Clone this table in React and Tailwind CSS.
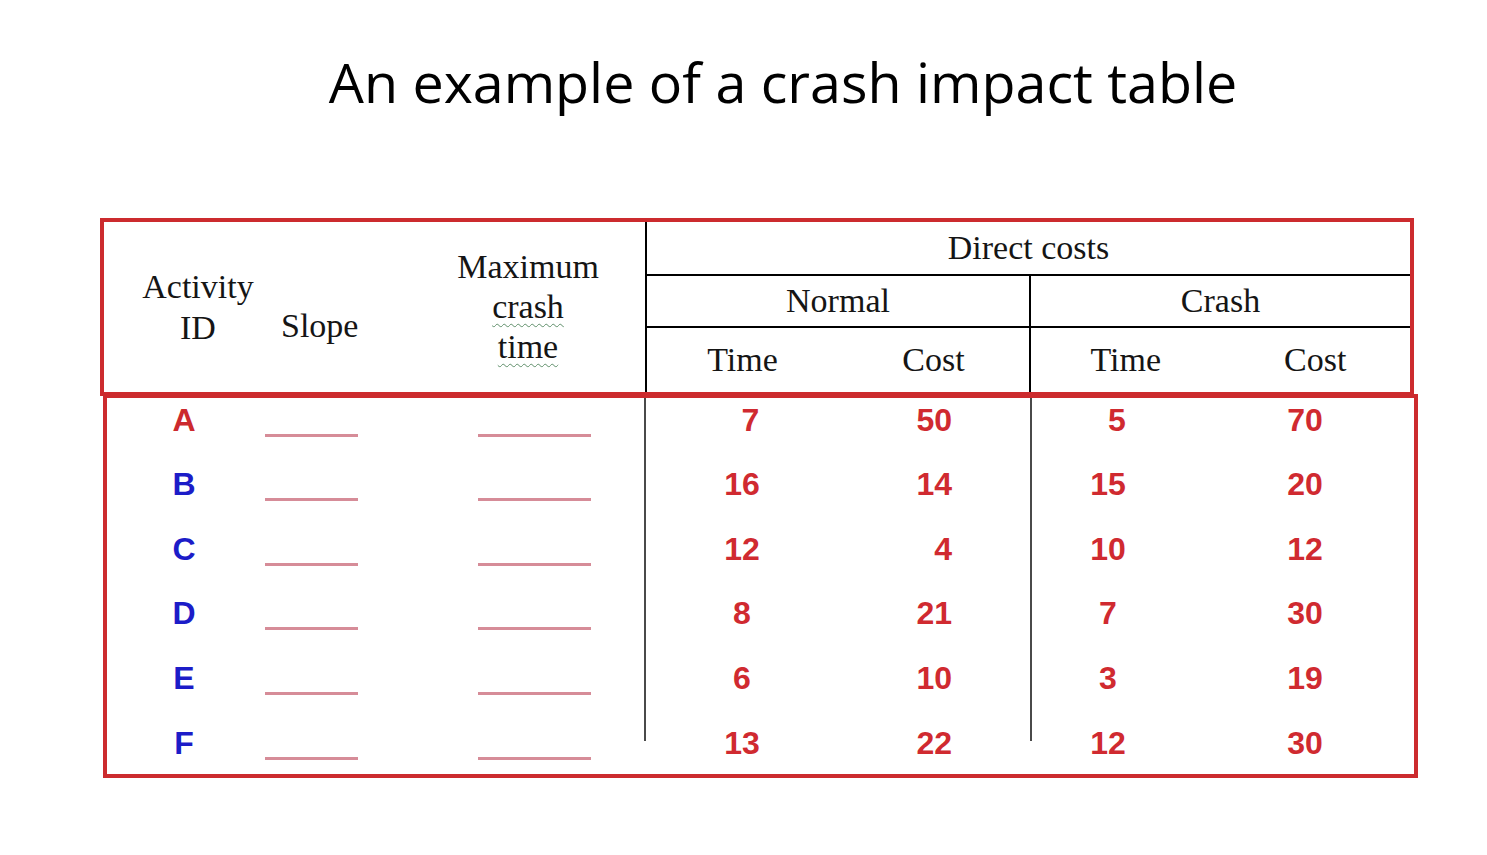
const rows = [
  { id: "A", idColor: "text-[#cc2a2e]", nt: "7", nc: "50", ct: "5", cc: "70", shift: true },
  { id: "B", idColor: "text-[#1c1cc8]", nt: "16", nc: "14", ct: "15", cc: "20" },
  { id: "C", idColor: "text-[#1c1cc8]", nt: "12", nc: "4", ct: "10", cc: "12" },
  { id: "D", idColor: "text-[#1c1cc8]", nt: "8", nc: "21", ct: "7", cc: "30" },
  { id: "E", idColor: "text-[#1c1cc8]", nt: "6", nc: "10", ct: "3", cc: "19" },
  { id: "F", idColor: "text-[#1c1cc8]", nt: "13", nc: "22", ct: "12", cc: "30" },
];

const serif = "font-['Liberation_Serif','Times_New_Roman',serif] text-[34px] text-[#151515]";
const numFont = "font-['Liberation_Sans',Arial,sans-serif] font-bold text-[32px] leading-[32px]";
const red = "text-[#d02a30]";

const Blank = ({ className }) => (
  <div className={`shrink-0 mt-[30px] h-[3px] bg-[#d68c98] ${className}`} />
);

export default function App() {
  return (
    <div className="w-[1487px] h-[855px] bg-white overflow-hidden">
      <h1 className="pt-[54px] pl-[79px] text-center font-['Open_Sans',sans-serif] text-[55.6px] leading-none text-black">
        An example of a crash impact table
      </h1>

      {/* header block */}
      <div className="mt-[108px] ml-[100px] w-[1314px] h-[178px] border-4 border-[#cc2b2e] flex">
        <div className={`w-[541px] shrink-0 flex ${serif}`}>
          <div className="w-[170px] shrink-0 pl-[18px] flex items-center justify-center text-center leading-[41px]">
            <div>
              Activity
              <br />
              ID
            </div>
          </div>
          <div className="w-[192px] shrink-0 pl-[7px] pt-[38px] flex items-center">Slope</div>
          <div className="w-[124px] shrink-0 flex items-center justify-center text-center leading-[40px]">
            <div>
              Maximum
              <br />
              <span className="underline decoration-wavy decoration-[#5f8f6a] decoration-1 underline-offset-[5px]">crash</span>
              <br />
              <span className="underline decoration-wavy decoration-[#5f8f6a] decoration-1 underline-offset-[5px]">time</span>
            </div>
          </div>
        </div>

        <div className={`flex-1 border-l-2 border-black flex flex-col ${serif}`}>
          <div className="h-[54px] border-b-2 border-black flex items-center justify-center">
            Direct costs
          </div>
          <div className="h-[52px] border-b-2 border-black flex">
            <div className="w-[382px] shrink-0 flex items-center justify-center">Normal</div>
            <div className="flex-1 border-l-2 border-black flex items-center justify-center">Crash</div>
          </div>
          <div className="flex-1 flex">
            <div className="w-[382px] shrink-0 grid grid-cols-2 items-center text-center">
              <span>Time</span>
              <span>Cost</span>
            </div>
            <div className="flex-1 border-l-2 border-black grid grid-cols-2 items-center text-center">
              <span>Time</span>
              <span>Cost</span>
            </div>
          </div>
        </div>
      </div>

      {/* body block */}
      <div className="-mt-[2px] ml-[103px] w-[1315px] h-[384px] border-4 border-[#cc2b2e] flex">
        <div className="w-[537px] shrink-0 flex flex-col gap-[30.6px] pt-[6px]">
          {rows.map((r) => (
            <div key={r.id} className="h-[34px] flex">
              <div className={`w-[154px] shrink-0 text-center ${numFont} ${r.idColor}`}>{r.id}</div>
              <Blank className="ml-[4px] w-[93px]" />
              <Blank className="ml-[120px] w-[113px]" />
            </div>
          ))}
        </div>
        <div className="w-[2px] shrink-0 h-[343px] bg-[#4a4a4a]" />
        <div className="w-[384px] shrink-0 flex flex-col gap-[30.6px] pt-[6px]">
          {rows.map((r) => (
            <div key={r.id} className={`h-[34px] flex ${numFont} ${red}`}>
              <div className={`w-[192px] shrink-0 text-center ${r.shift ? "pl-[17px]" : ""}`}>{r.nt}</div>
              <div className="w-[114px] shrink-0 text-right">{r.nc}</div>
            </div>
          ))}
        </div>
        <div className="w-[2px] shrink-0 h-[343px] bg-[#4a4a4a]" />
        <div className="flex-1 flex flex-col gap-[30.6px] pt-[6px]">
          {rows.map((r) => (
            <div key={r.id} className={`h-[34px] flex ${numFont} ${red}`}>
              <div className={`w-[152px] shrink-0 text-center ${r.shift ? "pl-[18px]" : ""}`}>{r.ct}</div>
              <div className="w-[218px] shrink-0 ml-[12px] text-center">{r.cc}</div>
            </div>
          ))}
        </div>
      </div>
    </div>
  );
}
